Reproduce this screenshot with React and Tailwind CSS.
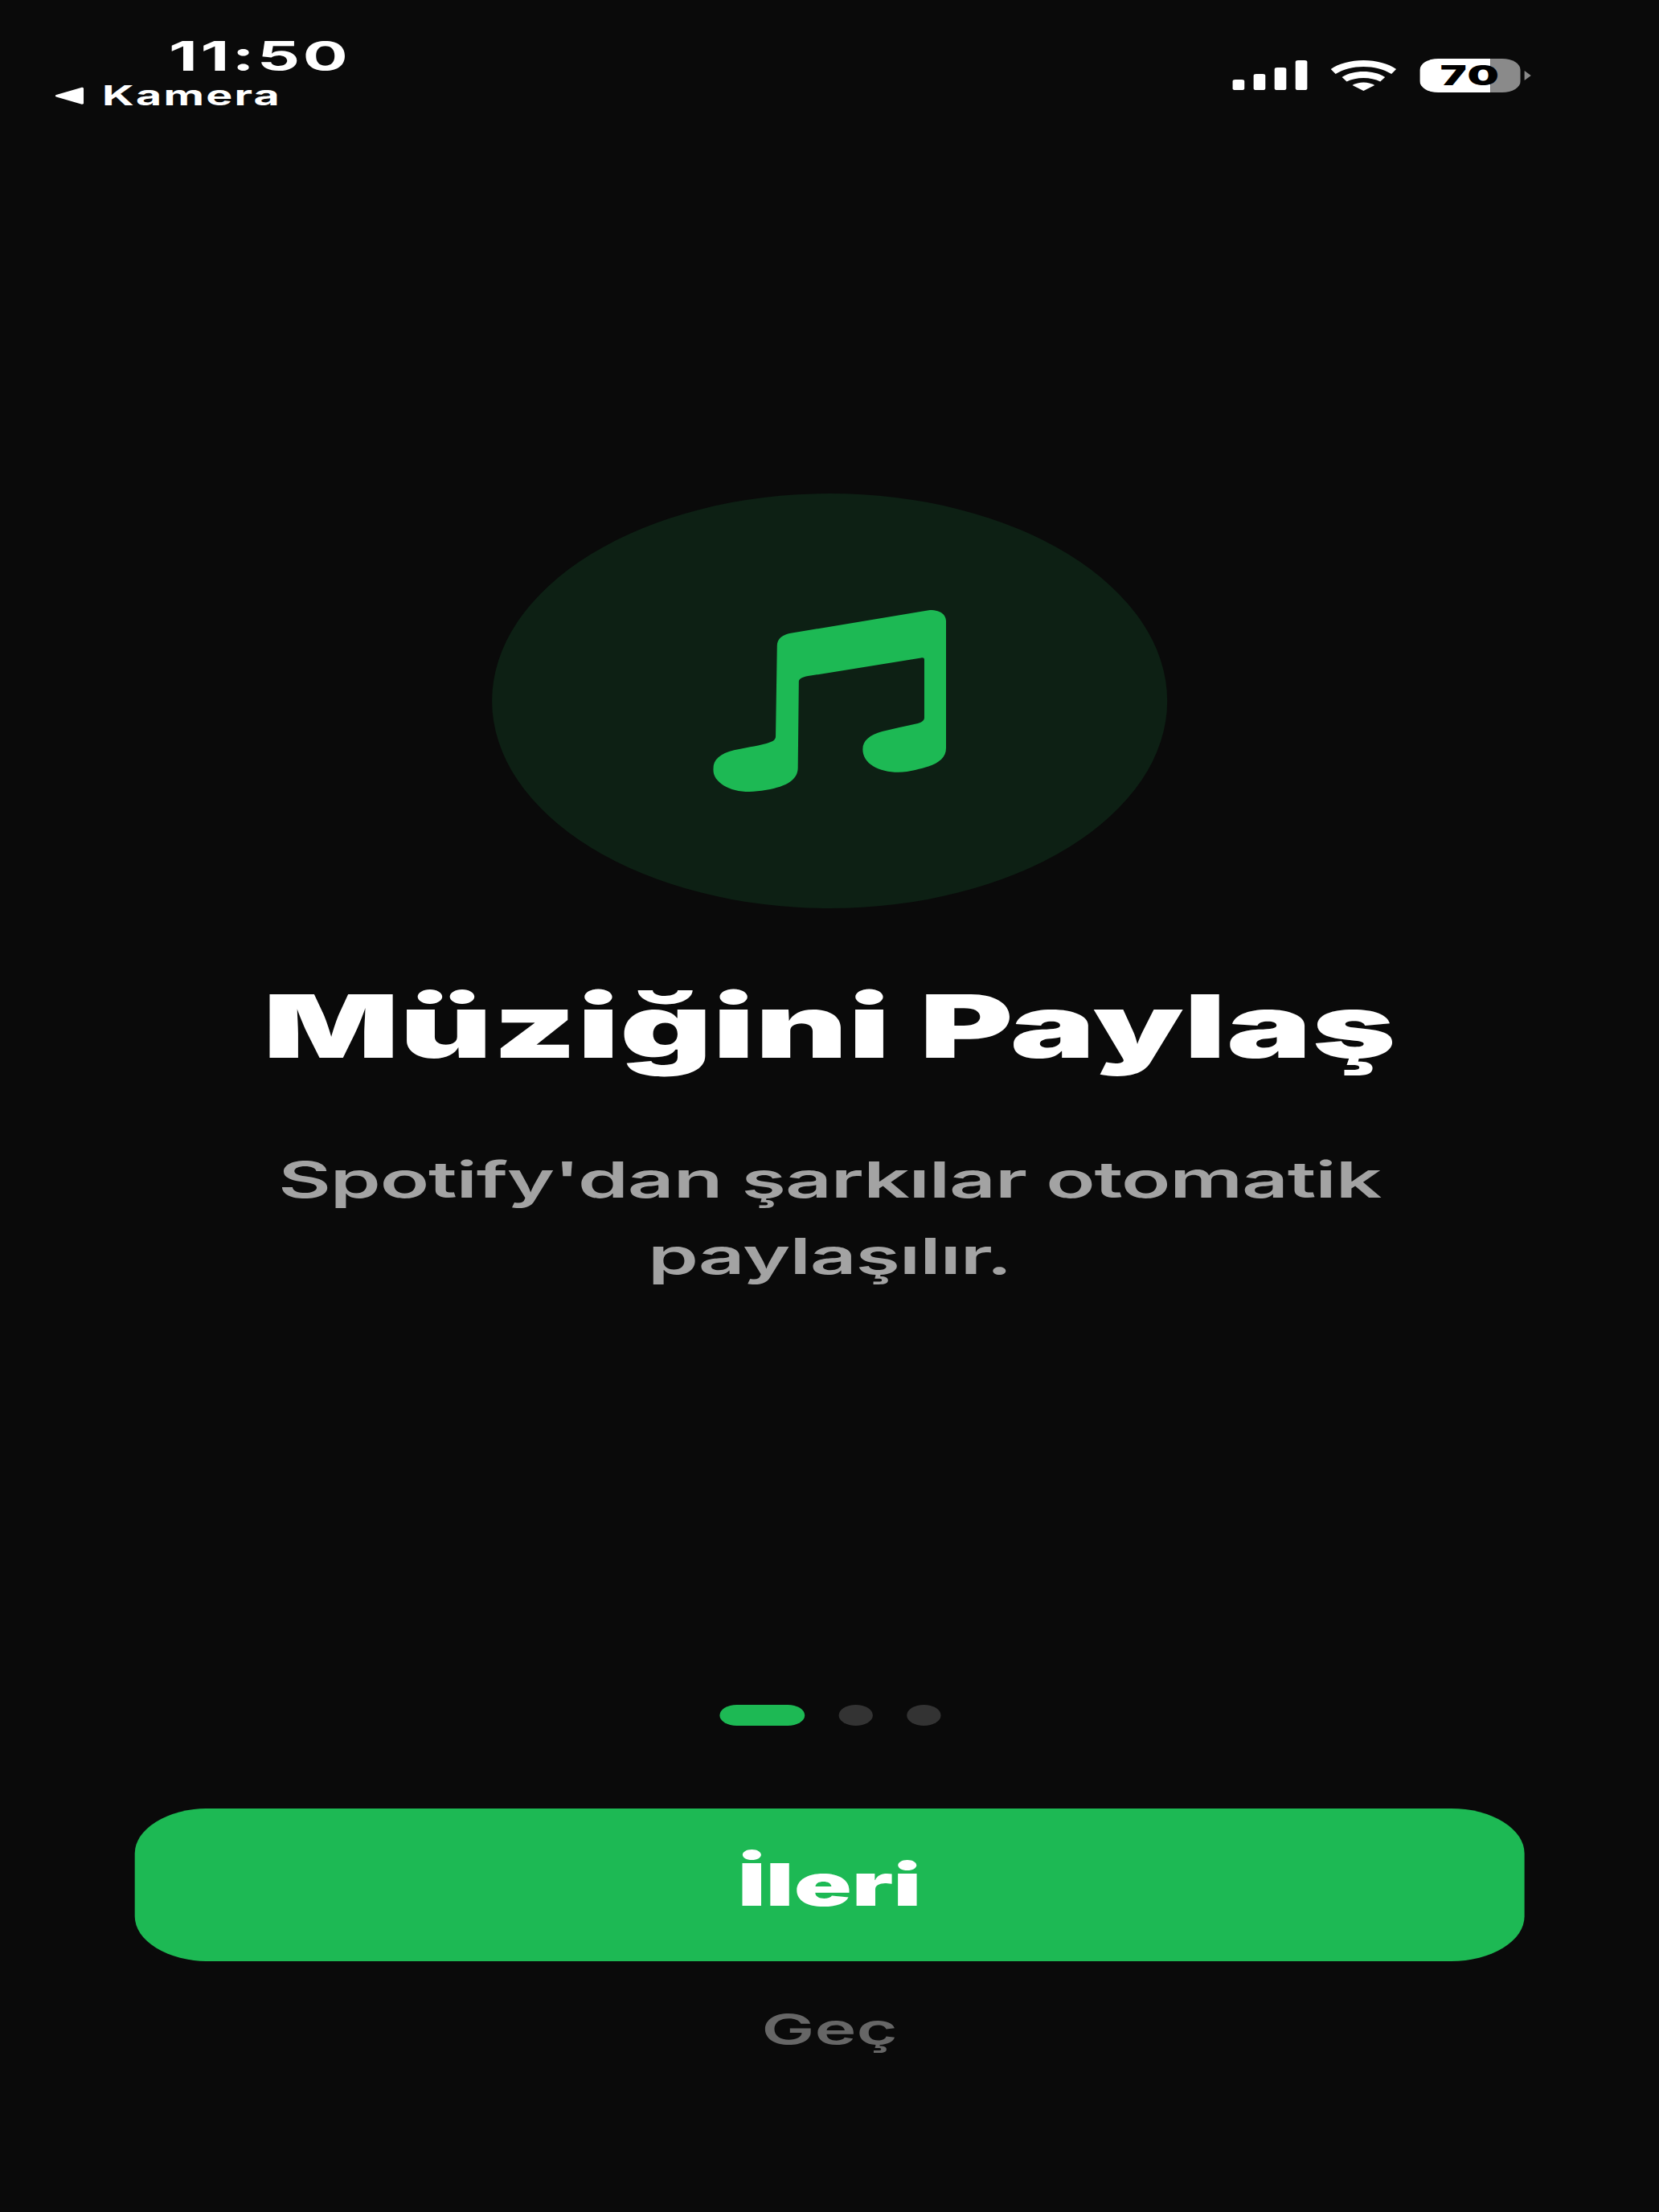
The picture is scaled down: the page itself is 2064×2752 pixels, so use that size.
import React from 'react'

const FONT = { fontFamily: 'Inter, "Liberation Sans", sans-serif' }

const MusicNote = () => (
  <svg viewBox="0 0 503 633" preserveAspectRatio="none" className="w-[178px] h-[226px]" fill="#1db954">
    <path d="M468 0C490 0 503 15 503 40L503 480C503 515 488 532 465 545C450 552 425 565 400 565C358 565 323 535 323 485C323 455 338 435 365 423C390 412 415 405 438 396C450 392 456 385 456 375L456 172C456 167 453 165 449 167L205 230C192 234 185 240 185 250L183 550C183 590 160 615 115 627C100 631 90 633 78 633C35 633 0 600 0 555C0 520 15 500 45 488C70 480 90 475 115 465C130 458 135 452 135 440L138 125C138 100 150 85 170 80Z" />
  </svg>
)

const Wifi = () => (
  <svg viewBox="0 0 82 38" preserveAspectRatio="none" className="w-[50px] h-[38px]" fill="#fff">
    <path d="M0 11C10 4 25 0 41 0C57 0 72 4 82 11L76 17C66 11 54 8 41 8C28 8 16 11 6 17Z" />
    <path d="M14 21C22 16 31 14 41 14C51 14 60 16 68 21L62 26.5C56 23.5 49 22 41 22C33 22 26 23.5 20 26.5Z" />
    <path d="M27 31C31 29 36 27.5 41 27.5C46 27.5 51 29 55 31L41 38Z" />
  </svg>
)

const StatusBar = () => (
  <div className="flex justify-between items-start pt-[45px] pl-[42px] pr-[98px]">
    <div className="flex flex-col">
      <span className="pl-[87px] text-[51px] leading-[50px] font-bold tracking-[2.2px] text-white">11:50</span>
      <div className="flex items-center gap-[14px] mt-[6px] h-[36px]">
        <svg viewBox="0 0 22 22" preserveAspectRatio="none" className="w-[22px] h-[22px]" fill="#fff">
          <path d="M1 10L20 1C21 0.6 22 1 22 2.5L22 20C22 21.5 21 22 20 21.4L1 12.5C0 12 0 10.6 1 10Z" />
        </svg>
        <span className="text-[34px] leading-[36px] font-bold tracking-[1.4px] text-white">Kamera</span>
      </div>
    </div>
    <div className="flex items-end mt-[28px]">
      <div className="flex items-end gap-[6.5px] mb-[3px]">
        <div className="w-[9.5px] h-[13px] rounded-[2px] bg-white" />
        <div className="w-[9.5px] h-[20px] rounded-[2px] bg-white" />
        <div className="w-[9.5px] h-[28px] rounded-[2px] bg-white" />
        <div className="w-[9.5px] h-[37px] rounded-[2px] bg-white" />
      </div>
      <div className="ml-[18px] mb-[2px]">
        <Wifi />
      </div>
      <div className="relative ml-[18px] w-[77px] h-[42px] rounded-[14px] overflow-hidden flex">
        <div className="w-[54px] bg-white" />
        <div className="flex-1 bg-[#8a8a8a]" />
        <span className="absolute inset-0 flex items-center justify-center text-[34px] leading-none font-black tracking-[1px] text-black">70</span>
      </div>
      <div className="ml-[3px] mb-[15px] w-0 h-0 border-y-[6px] border-y-transparent border-l-[5px] border-l-[#8a8a8a]" />
    </div>
  </div>
)

export default function App() {
  return (
    <div className="w-[2064px] h-[2752px] bg-[#0a0a0a] overflow-hidden" style={FONT}>
      <div className="w-[1268px] h-[2752px] origin-top-left scale-x-[1.628] flex flex-col">
        <StatusBar />

        <div className="self-center mt-[477px] w-[516px] h-[516px] rounded-full bg-[#0d2014] flex items-center justify-center">
          <MusicNote />
        </div>

        <h1 className="mt-[86px] text-center text-[109px] leading-[120px] font-black tracking-[0.3px] text-white">Müziğini Paylaş</h1>

        <p className="mt-[84px] text-center text-[62px] leading-[95px] font-semibold tracking-[-0.7px] text-[#a3a3a3]">
          Spotify'dan şarkılar otomatik
          <br />
          paylaşılır.
        </p>

        <div className="mt-[511px] flex justify-center gap-[26px]">
          <div className="w-[65px] h-[26px] rounded-full bg-[#1db954]" />
          <div className="w-[26px] h-[26px] rounded-full bg-[#333333]" />
          <div className="w-[26px] h-[26px] rounded-full bg-[#333333]" />
        </div>

        <button className="mt-[103px] mx-[103px] h-[190px] rounded-[56px] bg-[#1db954] text-white text-[73px] font-black">
          İleri
        </button>

        <div className="mt-[50px] text-center text-[54px] leading-[70px] font-semibold text-[#666666]">Geç</div>
      </div>
    </div>
  )
}
